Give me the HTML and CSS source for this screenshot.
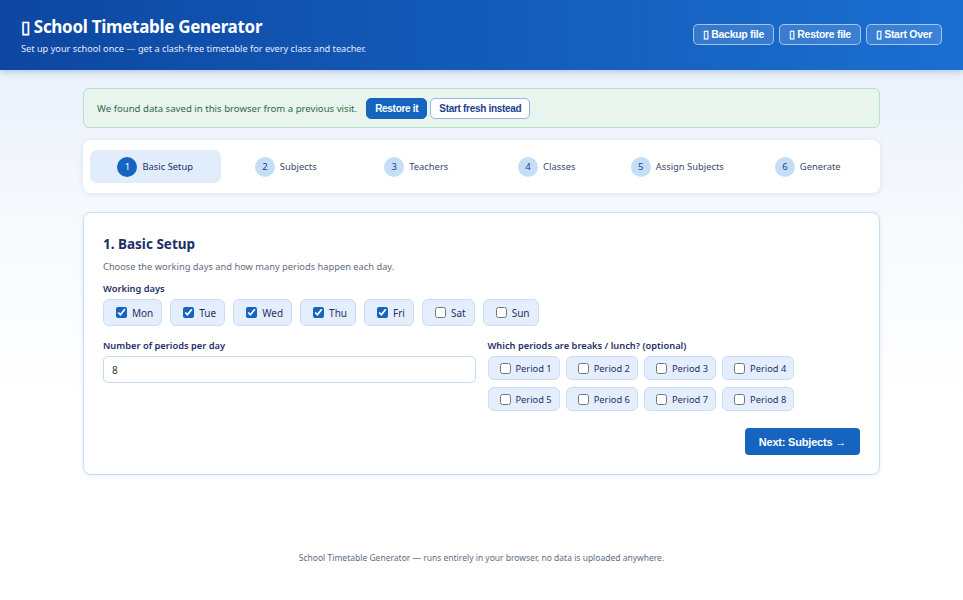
FILE: index.html
```html
<!DOCTYPE html>
<html lang="en">
<head>
  <meta charset="UTF-8">
  <title>School Timetable Generator</title>
  <link rel="stylesheet" href="styles.css">
</head>
<body>
  <header class="topbar">
    <div class="brand">
      <h1>▯ School Timetable Generator</h1>
      <p>Set up your school once — get a clash-free timetable for every class and teacher.</p>
    </div>
    <div class="top-actions">
      <button class="ghost">▯ Backup file</button>
      <button class="ghost">▯ Restore file</button>
      <button class="ghost">▯ Start Over</button>
    </div>
  </header>

  <main class="wrap">
    <div class="notice">
      <span>We found data saved in this browser from a previous visit.</span>
      <button class="btn-small primary">Restore it</button>
      <button class="btn-small outline">Start fresh instead</button>
    </div>

    <nav class="steps">
      <div class="step active"><span class="num">1</span>Basic Setup</div>
      <div class="step"><span class="num">2</span>Subjects</div>
      <div class="step"><span class="num">3</span>Teachers</div>
      <div class="step"><span class="num">4</span>Classes</div>
      <div class="step"><span class="num">5</span>Assign Subjects</div>
      <div class="step"><span class="num">6</span>Generate</div>
    </nav>

    <section class="card">
      <h2>1. Basic Setup</h2>
      <p class="hint">Choose the working days and how many periods happen each day.</p>

      <div class="label">Working days</div>
      <div class="days">
        <label class="chip day"><input type="checkbox" checked> Mon</label>
        <label class="chip day"><input type="checkbox" checked> Tue</label>
        <label class="chip day"><input type="checkbox" checked> Wed</label>
        <label class="chip day"><input type="checkbox" checked> Thu</label>
        <label class="chip day"><input type="checkbox" checked> Fri</label>
        <label class="chip day"><input type="checkbox"> Sat</label>
        <label class="chip day"><input type="checkbox"> Sun</label>
      </div>

      <div class="cols">
        <div>
          <div class="label">Number of periods per day</div>
          <input class="field" type="text" value="8">
        </div>
        <div>
          <div class="label">Which periods are breaks / lunch? (optional)</div>
          <div class="periods">
            <label class="chip period"><input type="checkbox"> Period 1</label>
            <label class="chip period"><input type="checkbox"> Period 2</label>
            <label class="chip period"><input type="checkbox"> Period 3</label>
            <label class="chip period"><input type="checkbox"> Period 4</label>
            <label class="chip period"><input type="checkbox"> Period 5</label>
            <label class="chip period"><input type="checkbox"> Period 6</label>
            <label class="chip period"><input type="checkbox"> Period 7</label>
            <label class="chip period"><input type="checkbox"> Period 8</label>
          </div>
        </div>
      </div>

      <div class="card-foot">
        <button class="next">Next: Subjects →</button>
      </div>
    </section>
  </main>

  <footer class="foot">School Timetable Generator — runs entirely in your browser, no data is uploaded anywhere.</footer>
</body>
</html>
```

FILE: styles.css
```css
body {
  margin: 0;
  font-family: "Noto Sans", sans-serif;
  font-size: 11px;
  color: #1f2d4d;
  background: linear-gradient(180deg, #e6eefa 0px, #f7f9fd 220px, #ffffff 400px);
  min-height: 600px;
}
.topbar {
  height: 70px;
  box-sizing: border-box;
  padding: 0 21px;
  display: flex;
  align-items: center;
  justify-content: space-between;
  background: linear-gradient(90deg, #0d47a1, #1a6fd1);
  color: #fff;
  box-shadow: 0 2px 6px rgba(13, 71, 161, 0.25);
}
.brand h1 {
  margin: 0 0 4px;
  font-size: 17px;
  font-weight: 700;
  letter-spacing: -0.3px;
}
.brand p {
  margin: 0;
  font-size: 9.2px;
  color: #e3ecfb;
}
.top-actions {
  display: flex;
  gap: 5px;
  margin-top: -2px;
}
.ghost {
  font-family: "Liberation Sans", Arial, sans-serif;
  font-size: 10.5px;
  font-weight: 700;
  color: #fff;
  background: rgba(255, 255, 255, 0.14);
  border: 1px solid rgba(255, 255, 255, 0.55);
  border-radius: 5px;
  padding: 0 9px;
  height: 21px;
  letter-spacing: -0.3px;
}
.wrap {
  width: 797px;
  margin: 18px auto 0;
}
.notice {
  display: flex;
  align-items: center;
  gap: 3px;
  height: 40px;
  box-sizing: border-box;
  padding: 0 13px;
  background: #e7f5ee;
  border: 1px solid #b8dfc9;
  border-radius: 6px;
  color: #2f6a4c;
  font-size: 9.6px;
}
.notice span {
  margin-right: 6px;
}
.btn-small {
  font-family: "Liberation Sans", Arial, sans-serif;
  font-size: 10px;
  font-weight: 700;
  height: 21px;
  padding: 0 8px;
  border-radius: 5px;
  letter-spacing: -0.3px;
}
.primary {
  background: #1565c0;
  color: #fff;
  border: 1px solid #1565c0;
}
.outline {
  background: #fff;
  color: #1a3f8c;
  border: 1px solid #8fb6e8;
}
.steps {
  display: flex;
  margin-top: 12px;
  padding: 10px 7px;
  background: #fff;
  border-radius: 8px;
  box-shadow: 0 1px 6px rgba(40, 80, 150, 0.12);
}
.step {
  flex: 1;
  display: flex;
  align-items: center;
  justify-content: center;
  gap: 5px;
  height: 33px;
  border-radius: 7px;
  color: #3b4866;
  font-size: 9.4px;
}
.step.active {
  background: #e2edfc;
  color: #1a2e6b;
}
.num {
  width: 20px;
  height: 20px;
  border-radius: 50%;
  display: flex;
  align-items: center;
  justify-content: center;
  background: #c4def8;
  color: #1a3f8c;
  font-size: 9.5px;
}
.step.active .num {
  background: #1565c0;
  color: #fff;
}
.card {
  margin-top: 19px;
  padding: 20px 19px 19px;
  background: #fff;
  border: 1px solid #c9dcf4;
  border-radius: 8px;
  box-shadow: 0 1px 5px rgba(40, 80, 150, 0.1);
}
.card h2 {
  margin: 2px 0 7px;
  font-size: 13.5px;
  font-weight: 700;
  color: #1a2e6b;
}
.hint {
  margin: 0 0 9px;
  font-size: 9.3px;
  color: #5f6b80;
}
.label {
  font-size: 9.3px;
  font-weight: 600;
  color: #1f2f66;
  margin-bottom: 4px;
}
.days {
  display: flex;
  gap: 8px;
  margin-top: 1px;
  margin-bottom: 13px;
}
.chip {
  display: flex;
  align-items: center;
  box-sizing: border-box;
  background: #e4eefc;
  border: 1px solid #cbdcf3;
  border-radius: 6px;
  color: #1f2f66;
}
.chip input {
  margin: 0 5px 0 0;
  width: 11px;
  height: 11px;
  accent-color: #1565c0;
}
.day {
  height: 27px;
  padding: 0 8px 0 12px;
  font-size: 10px;
}
.cols {
  display: grid;
  grid-template-columns: 1fr 1fr;
  gap: 12px;
}
.field {
  width: 100%;
  box-sizing: border-box;
  height: 27px;
  padding: 0 8px;
  border: 1px solid #c5d8f0;
  border-radius: 5px;
  font-family: "Noto Sans", sans-serif;
  font-size: 10px;
  color: #333;
}
.periods {
  display: grid;
  grid-template-columns: repeat(4, max-content);
  gap: 7px 6px;
}
.period {
  height: 24px;
  padding: 0 7px 0 11px;
  font-size: 9.3px;
}
.period input {
  margin-right: 5px;
}
.card-foot {
  display: flex;
  justify-content: flex-end;
  margin-top: 17px;
}
.next {
  font-family: "Liberation Sans", Arial, sans-serif;
  font-size: 11px;
  font-weight: 700;
  color: #fff;
  background: #1565c0;
  border: none;
  border-radius: 4px;
  height: 27px;
  padding: 0 14px;
  letter-spacing: -0.2px;
}
.foot {
  margin-top: 77px;
  text-align: center;
  font-size: 8.5px;
  color: #5f6b80;
}
```
